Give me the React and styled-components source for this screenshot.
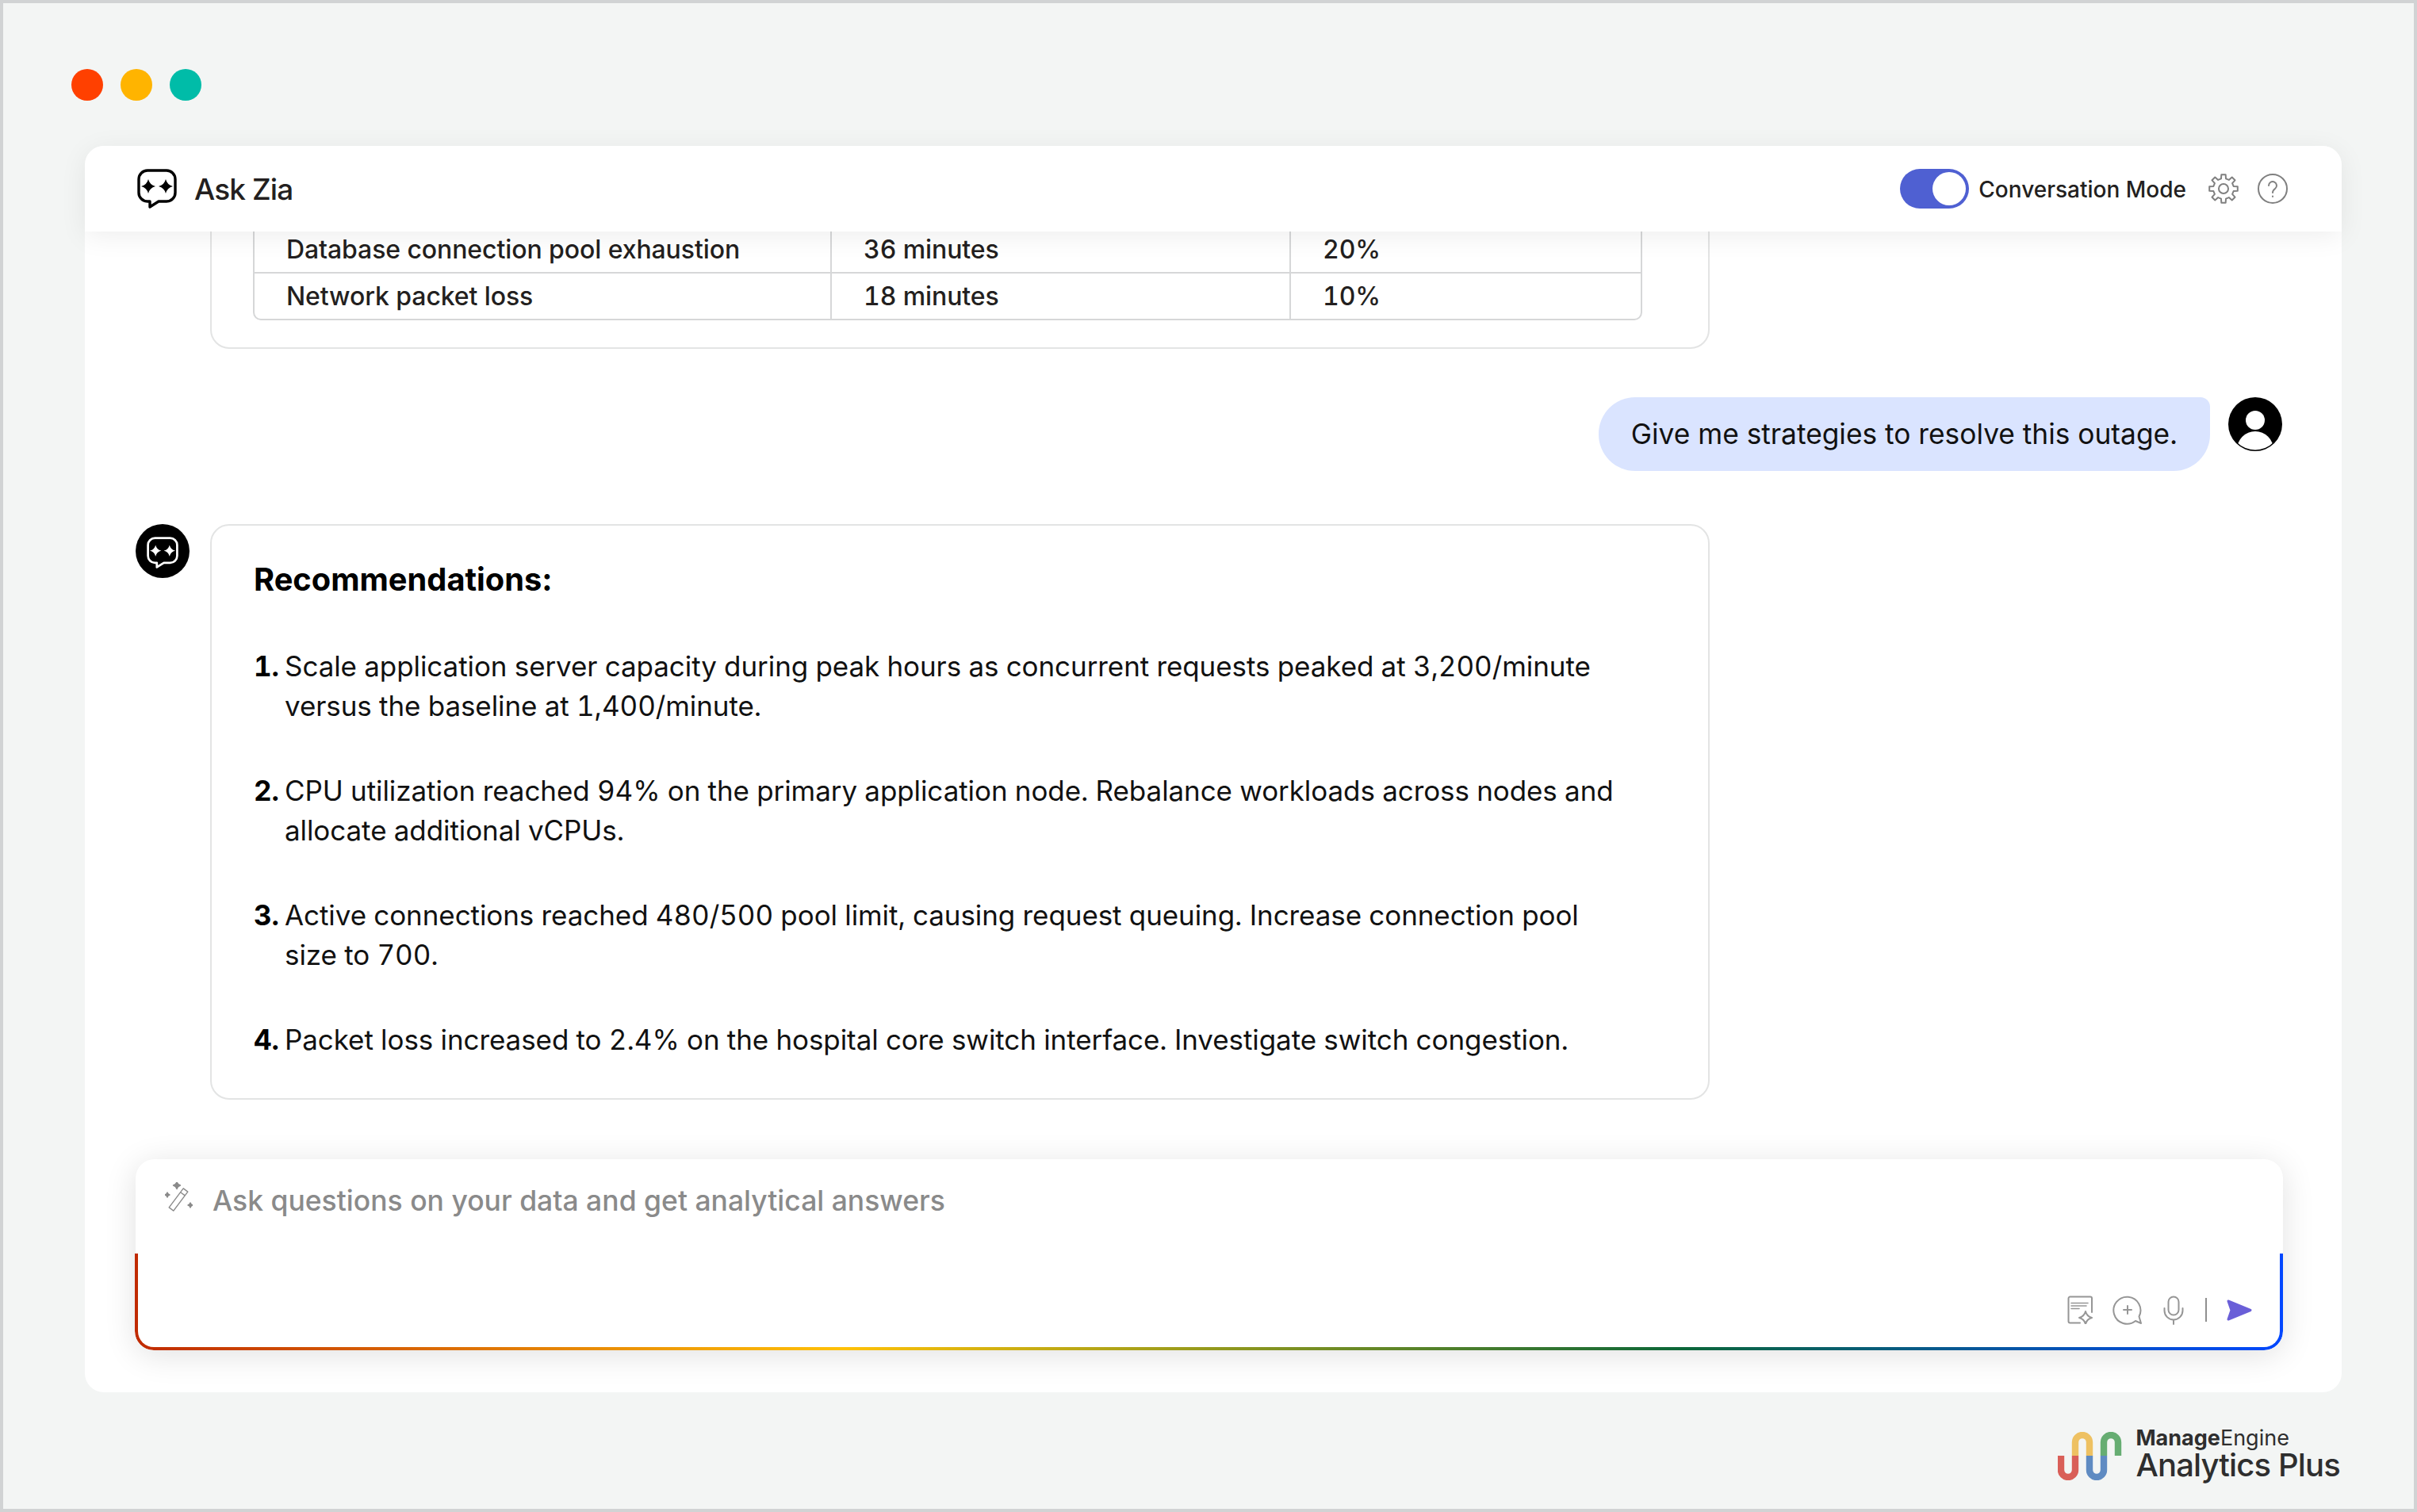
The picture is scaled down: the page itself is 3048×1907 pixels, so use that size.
import React from "react";
import styled, { createGlobalStyle } from "styled-components";

const FONT = `Inter, "Noto Sans", "Liberation Sans", sans-serif`;

const Global = createGlobalStyle`
  html, body { margin: 0; padding: 0; background: #f3f5f4; }
  * { box-sizing: border-box; }
  body { font-family: ${FONT}; color: #111; }
`;

const Frame = styled.div`
  width: 3048px;
  height: 1907px;
  border: 4px solid #d1d3d4;
  background: #f3f5f4;
  display: flex;
  flex-direction: column;
  overflow: hidden;
`;
const TrafficLights = styled.div`
  display: flex;
  gap: 22px;
  padding: 83px 0 57px 86px;
`;
const Light = styled.span`
  width: 40px;
  height: 40px;
  border-radius: 50%;
  background: ${(p) => p.$color};
`;
const Panel = styled.main`
  width: 2846px;
  height: 1572px;
  margin-left: 103px;
  background: #fff;
  border-radius: 24px;
  display: flex;
  flex-direction: column;
`;
const Header = styled.header`
  position: relative;
  z-index: 2;
  flex: 0 0 108px;
  display: flex;
  align-items: center;
  justify-content: space-between;
  padding: 0 68px 0 66px;
  background: #fff;
  border-radius: 24px 24px 0 0;
  box-shadow: 0 6px 34px rgba(0, 0, 0, 0.07);
`;
const Brand = styled.div`
  display: flex;
  align-items: center;
  gap: 22px;
`;
const Title = styled.h1`
  margin: 0;
  font-size: 37px;
  letter-spacing: -0.9px;
  font-weight: 500;
  color: #231f20;
`;
const Tools = styled.div`
  display: flex;
  align-items: center;
`;
const Toggle = styled.div`
  width: 87px;
  height: 50px;
  border-radius: 25px;
  background: #4f60d2;
  padding: 4px;
  display: flex;
  justify-content: flex-end;
`;
const Knob = styled.span`
  width: 42px;
  height: 42px;
  border-radius: 50%;
  background: #fff;
`;
const ModeLabel = styled.span`
  margin: 0 28px 0 12px;
  padding-top: 2px;
  font-size: 28px;
  font-weight: 500;
  color: #231f20;
`;
const ToolIcon = styled.svg`
  width: 38px;
  height: 38px;
  margin-left: ${(p) => p.$gap || 0}px;
  fill: none;
  stroke: #808080;
  stroke-width: 2;
  stroke-linejoin: round;
  stroke-linecap: round;
`;
const Messages = styled.section`
  flex: 1;
  min-height: 0;
  overflow: hidden;
  display: flex;
  flex-direction: column;
  justify-content: flex-end;
  padding: 0 75px 75px 64px;
`;
const AssistantRow = styled.div`
  flex: none;
  display: grid;
  grid-template-columns: 68px 1891px;
  gap: 26px;
  align-items: start;
`;
const Card = styled.article`
  grid-column: 2;
  background: #fff;
  border: 2px solid #e3e4e4;
  border-radius: 24px;
  padding: ${(p) => p.$padding};
`;
const Table = styled.div`
  border: 2px solid #d6d7d8;
  border-radius: 0 0 10px 10px;
`;
const TableRow = styled.div`
  display: grid;
  grid-template-columns: 726px 579px 1fr;
  height: ${(p) => (p.$last ? 57 : 59)}px;
  border-bottom: ${(p) => (p.$last ? "none" : "2px solid #d6d7d8")};
`;
const Cell = styled.div`
  display: flex;
  align-items: center;
  padding-left: 40px;
  font-size: 32px;
  letter-spacing: -0.1px;
  font-weight: 500;
  font-variant-numeric: tabular-nums;
  color: #231f20;
  border-left: ${(p) => (p.$first ? "none" : "2px solid #d6d7d8")};
`;
const UserRow = styled.div`
  flex: none;
  display: flex;
  justify-content: flex-end;
  gap: 23px;
  margin: 61px 0 67px;
  align-items: flex-start;
`;
const Bubble = styled.div`
  width: 771px;
  height: 93px;
  background: #dae4ff;
  border-radius: 46px 12px 46px 46px;
  display: flex;
  align-items: center;
  justify-content: center;
  font-size: 35.3px;
  color: #111;
`;
const Avatar = styled.svg`
  width: 68px;
  height: 68px;
  display: block;
`;
const Heading = styled.h2`
  margin: 0 0 ${(p) => p.$after || 0}px;
  font-size: 39.8px;
  line-height: 50px;
  font-weight: 700;
  color: #000;
`;
const Steps = styled.ol`
  list-style: none;
  margin: 0;
  padding: 0;
  display: flex;
  flex-direction: column;
  gap: 57px;
`;
const Step = styled.li`
  display: grid;
  grid-template-columns: 39px 1fr;
  font-size: 35px;
  letter-spacing: -0.08px;
  line-height: 50px;
  font-variant-numeric: tabular-nums;
  color: #111;
`;
const StepNumber = styled.strong`
  font-weight: 700;
  color: #000;
`;
const Composer = styled.section`
  position: relative;
  flex: 0 0 241px;
  margin: 0 74px 53px 64px;
  background: #fff;
  border-radius: 24px;
  box-shadow: 0 6px 40px rgba(0, 0, 0, 0.12);
  padding: 29px 39px 32px 37px;
  display: flex;
  flex-direction: column;
  justify-content: space-between;
  &::after {
    content: "";
    position: absolute;
    left: -1.5px;
    right: 0;
    bottom: 0;
    height: 118px;
    border: 4px solid transparent;
    border-top: 0;
    border-radius: 0 0 24px 24px;
    background: linear-gradient(90deg, #c02a00 0%, #ffc107 33%, #0b6638 72%, #0047ff 100%) border-box;
    -webkit-mask: linear-gradient(#000 0 0) padding-box, linear-gradient(#000 0 0);
    -webkit-mask-composite: xor;
    mask-composite: exclude;
  }
`;
const PromptRow = styled.div`
  display: flex;
  align-items: flex-start;
  gap: 25px;
`;
const Placeholder = styled.span`
  font-size: 35.5px;
  line-height: 48px;
  font-weight: 500;
  color: #8a8a8a;
`;
const WandIcon = styled.svg`
  width: 35px;
  height: 39px;
  fill: none;
  stroke: #8a8a8a;
  stroke-width: 1.4;
  stroke-linejoin: round;
`;
const Actions = styled.div`
  display: flex;
  align-items: center;
  justify-content: flex-end;
  position: relative;
  z-index: 1;
`;
const ActionIcon = styled.svg`
  display: block;
  margin-left: ${(p) => p.$gap || 0}px;
  fill: none;
  stroke: #969696;
  stroke-width: 2;
  stroke-linecap: round;
  stroke-linejoin: round;
`;
const Divider = styled.span`
  width: 2px;
  height: 30px;
  margin: 0 24px 0 27px;
  background: #8f8f8f;
`;
const Footer = styled.footer`
  flex: 1;
  display: flex;
  justify-content: flex-end;
  align-items: flex-start;
  gap: 17px;
  padding: 43px 93px 0 0;
`;
const Wordmark = styled.div`
  display: flex;
  flex-direction: column;
  color: #2e2e2e;
`;
const CompanyName = styled.span`
  font-size: 27px;
  line-height: 30px;
  font-weight: 400;
  & b { font-weight: 700; }
`;
const ProductName = styled.span`
  font-size: 40px;
  letter-spacing: -0.85px;
  line-height: 38px;
  font-weight: 500;
`;

const star = (cx, cy, r) => {
  const k = r * 0.2;
  return `M${cx} ${cy - r}Q${cx + k} ${cy - k} ${cx + r} ${cy}Q${cx + k} ${cy + k} ${cx} ${cy + r}Q${cx - k} ${cy + k} ${cx - r} ${cy}Q${cx - k} ${cy - k} ${cx} ${cy - r}Z`;
};

const gearPath = (cx, cy, outer, inner, teeth) => {
  const pts = [];
  const step = (Math.PI * 2) / teeth;
  for (let i = 0; i < teeth; i++) {
    const a = i * step - Math.PI / 2;
    const p = (r, d) => [(cx + r * Math.cos(a + d * step)).toFixed(2), (cy + r * Math.sin(a + d * step)).toFixed(2)].join(" ");
    pts.push(p(inner, -0.3), p(outer, -0.19), p(outer, 0.19), p(inner, 0.3));
  }
  return `M${pts.join("L")}Z`;
};

const ZiaGlyph = ({ color, fillStars, size = 50, width = 3.4 }) => (
  <svg width={size} height={size} viewBox="0 0 50 50" style={{ display: "block" }}>
    <path
      d="M13 2H37A11 11 0 0 1 48 13V30A11 11 0 0 1 37 41H27L16 48V41H13A11 11 0 0 1 2 30V13A11 11 0 0 1 13 2Z"
      fill="none"
      stroke={color}
      strokeWidth={width}
      strokeLinejoin="round"
    />
    <path d={star(14, 22, 9)} fill={fillStars} />
    <path d={star(36, 22, 9)} fill={fillStars} />
  </svg>
);

const ZiaAvatar = styled.div`
  width: 68px;
  height: 68px;
  border-radius: 50%;
  background: #000;
  display: flex;
  align-items: center;
  justify-content: center;
  padding-top: 4px;
`;

const LogoMark = () => (
  <svg width="81" height="61" viewBox="0 0 81 61" fill="none" strokeWidth="8.4" style={{ marginTop: 7, display: "block" }}>
    <path d="M4 30V48a9 9 0 0 0 18 0V30" stroke="#d95f58" />
    <path d="M22 30V13a9 9 0 0 1 18 0V30" stroke="#eec162" />
    <path d="M40 30V48a9 9 0 0 0 18 0V30" stroke="#5f8bc2" />
    <path d="M58 30V13a9 9 0 0 1 18 0V30" stroke="#66ad72" />
  </svg>
);

const steps = [
  "Scale application server capacity during peak hours as concurrent requests peaked at 3,200/minute versus the baseline at 1,400/minute.",
  "CPU utilization reached 94% on the primary application node. Rebalance workloads across nodes and allocate additional vCPUs.",
  "Active connections reached 480/500 pool limit, causing request queuing. Increase connection pool size to 700.",
  "Packet loss increased to 2.4% on the hospital core switch interface. Investigate switch congestion.",
];

const rows = [
  ["Database connection pool exhaustion", "36 minutes", "20%"],
  ["Network packet loss", "18 minutes", "10%"],
];

export default function App() {
  return (
    <Frame>
      <Global />
      <TrafficLights>
        <Light $color="#ff4000" />
        <Light $color="#ffb400" />
        <Light $color="#00bca8" />
      </TrafficLights>
      <Panel>
        <Header>
          <Brand>
            <ZiaGlyph color="#000" fillStars="#000" />
            <Title>Ask Zia</Title>
          </Brand>
          <Tools>
            <Toggle><Knob /></Toggle>
            <ModeLabel>Conversation Mode</ModeLabel>
            <ToolIcon viewBox="0 0 38 38">
              <path d={gearPath(19, 19, 18, 13, 8)} />
              <circle cx="19" cy="19" r="6" />
            </ToolIcon>
            <ToolIcon viewBox="0 0 38 38" $gap={24}>
              <circle cx="19" cy="19" r="18" />
              <path d="M14 15a5 5 0 1 1 8 4c-2 1.5-3 2.500-3 5" />
              <path d="M19 28.500v.5" />
            </ToolIcon>
          </Tools>
        </Header>
        <Messages>
          <AssistantRow>
            <Card $padding="60px 83px 34px 52px">
              <Table>
                {rows.map((r, i) => (
                  <TableRow key={r[0]} $last={i === rows.length - 1}>
                    {r.map((c, j) => (
                      <Cell key={c} $first={j === 0}>{c}</Cell>
                    ))}
                  </TableRow>
                ))}
              </Table>
            </Card>
          </AssistantRow>
          <UserRow>
            <Bubble>Give me strategies to resolve this outage.</Bubble>
            <Avatar viewBox="0 0 68 68">
              <defs>
                <clipPath id="avatarClip"><circle cx="34" cy="34" r="32.500" /></clipPath>
              </defs>
              <circle cx="34" cy="34" r="34" fill="#000" />
              <ellipse cx="34" cy="29" rx="12" ry="12" fill="#fff" />
              <circle cx="34" cy="66" r="23" fill="#fff" clipPath="url(#avatarClip)" />
            </Avatar>
          </UserRow>
          <AssistantRow>
            <ZiaAvatar><ZiaGlyph color="#fff" fillStars="#fff" size={40} width={3.4} /></ZiaAvatar>
            <Card $padding="43px 110px 49px 53px">
              <Heading $after={59}>Recommendations:</Heading>
              <Steps>
                {steps.map((s, i) => (
                  <Step key={s}>
                    <StepNumber>{i + 1}.</StepNumber>
                    <span>{s}</span>
                  </Step>
                ))}
              </Steps>
            </Card>
          </AssistantRow>
        </Messages>
        <Composer>
          <PromptRow>
            <WandIcon viewBox="0 0 35 39">
              <path d="M5.2 31.900L23.200 7.900L28.800 12.100L10.800 36.100Z" />
              <path d="M19.600 12.700L25.200 16.900" />
              <path d={star(15, 4, 4.500)} fill="#8a8a8a" />
              <path d={star(3, 16, 3)} fill="#8a8a8a" />
              <path d={star(32, 29, 3)} fill="#8a8a8a" />
            </WandIcon>
            <Placeholder>Ask questions on your data and get analytical answers</Placeholder>
          </PromptRow>
          <Actions>
            <ActionIcon width="33" height="36" viewBox="0 0 33 36">
              <path d="M31 21V3.500a2 2 0 0 0-2-2H3.500a2 2 0 0 0-2 2V32.500a2 2 0 0 0 2 2H16" />
              <path d="M5 9.500H26M5 13H24M5 16.500H15" strokeWidth="1.600" />
              <path d={star(23, 28, 8)} />
            </ActionIcon>
            <ActionIcon width="38" height="38" viewBox="0 0 38 38" $gap={24}>
              <path d="M29 33A17 17 0 1 1 33.500 27.500L36 36Z" />
              <path d="M19 14V24M14 19H24" />
            </ActionIcon>
            <ActionIcon width="26" height="37" viewBox="0 0 26 37" $gap={26}>
              <rect x="6.500" y="1.500" width="13" height="23" rx="6.500" />
              <path d="M1.500 16v3a11.500 11.500 0 0 0 23 0v-3M13 31v5" />
            </ActionIcon>
            <Divider />
            <svg width="33" height="29" viewBox="0 0 33 29" style={{ display: "block" }}>
              <path d="M3 3L31 14.500L3 26L7 14.500Z" fill="#6a5fd8" stroke="#6a5fd8" strokeWidth="3" strokeLinejoin="round" />
            </svg>
          </Actions>
        </Composer>
      </Panel>
      <Footer>
        <LogoMark />
        <Wordmark>
          <CompanyName><b>Manage</b>Engine</CompanyName>
          <ProductName>Analytics Plus</ProductName>
        </Wordmark>
      </Footer>
    </Frame>
  );
}
